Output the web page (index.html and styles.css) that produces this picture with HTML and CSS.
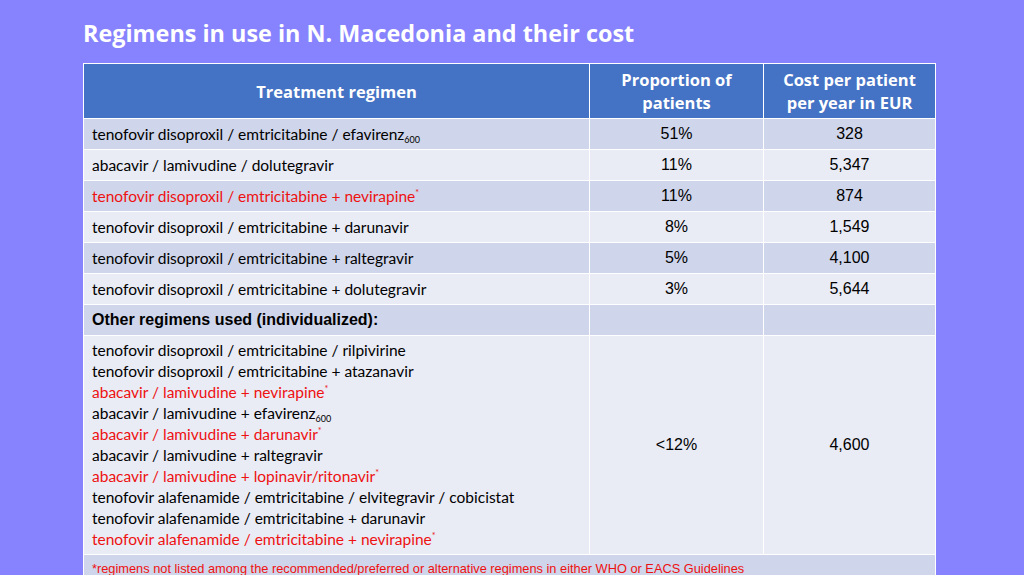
FILE: index.html
```html
<!DOCTYPE html>
<html>
<head>
<meta charset="utf-8">
<link rel="stylesheet" href="styles.css">
</head>
<body>
<div class="slide">
  <h1 class="title">Regimens in use in N. Macedonia and their cost</h1>
  <table class="regimens">
    <colgroup>
      <col class="c-reg">
      <col class="c-prop">
      <col class="c-cost">
    </colgroup>
    <thead>
      <tr>
        <th>Treatment regimen</th>
        <th>Proportion of patients</th>
        <th>Cost per patient per year in EUR</th>
      </tr>
    </thead>
    <tbody>
      <tr class="dark"><td class="reg">tenofovir disoproxil / emtricitabine / efavirenz<sub>600</sub></td><td class="num">51%</td><td class="num">328</td></tr>
      <tr class="light"><td class="reg">abacavir / lamivudine / dolutegravir</td><td class="num">11%</td><td class="num">5,347</td></tr>
      <tr class="dark"><td class="reg red">tenofovir disoproxil / emtricitabine + nevirapine<sup>*</sup></td><td class="num">11%</td><td class="num">874</td></tr>
      <tr class="light"><td class="reg">tenofovir disoproxil / emtricitabine + darunavir</td><td class="num">8%</td><td class="num">1,549</td></tr>
      <tr class="dark"><td class="reg">tenofovir disoproxil / emtricitabine + raltegravir</td><td class="num">5%</td><td class="num">4,100</td></tr>
      <tr class="light"><td class="reg">tenofovir disoproxil / emtricitabine + dolutegravir</td><td class="num">3%</td><td class="num">5,644</td></tr>
      <tr class="dark"><td class="other">Other regimens used (individualized):</td><td></td><td></td></tr>
      <tr class="light">
        <td class="reg list">
          <div>tenofovir disoproxil / emtricitabine / rilpivirine</div>
          <div>tenofovir disoproxil / emtricitabine + atazanavir</div>
          <div class="red">abacavir / lamivudine + nevirapine<sup>*</sup></div>
          <div>abacavir / lamivudine + efavirenz<sub>600</sub></div>
          <div class="red">abacavir / lamivudine + darunavir<sup>*</sup></div>
          <div>abacavir / lamivudine + raltegravir</div>
          <div class="red">abacavir / lamivudine + lopinavir/ritonavir<sup>*</sup></div>
          <div>tenofovir alafenamide / emtricitabine / elvitegravir / cobicistat</div>
          <div>tenofovir alafenamide / emtricitabine + darunavir</div>
          <div class="red">tenofovir alafenamide / emtricitabine + nevirapine<sup>*</sup></div>
        </td>
        <td class="num">&lt;12%</td>
        <td class="num">4,600</td>
      </tr>
      <tr class="dark"><td class="note" colspan="3">*regimens not listed among the recommended/preferred or alternative regimens in either WHO or EACS Guidelines</td></tr>
    </tbody>
  </table>
</div>
</body>
</html>
```

FILE: styles.css
```css
html, body {
  margin: 0;
  padding: 0;
  background: #8782fe;
  overflow: hidden;
}
.slide {
  width: 1024px;
  height: 575px;
  padding: 17px 0 0 83px;
  box-sizing: border-box;
}
.title {
  margin: 0 0 14px 0;
  font-family: "Open Sans", "Noto Sans", sans-serif;
  font-weight: 700;
  font-size: 23.4px;
  line-height: 32px;
  color: #ffffff;
}
.regimens {
  border-collapse: collapse;
  width: 852px;
  table-layout: fixed;
  font-family: Lato, "Liberation Sans", sans-serif;
  font-size: 15.5px;
  color: #000;
}
.c-reg { width: 506px; }
.c-prop { width: 174px; }
.c-cost { width: 172px; }
.regimens th, .regimens td {
  border: 1.5px solid #ffffff;
  padding: 0;
}
.regimens th {
  background: #4472c4;
  color: #fff;
  font-family: "Open Sans", "Noto Sans", sans-serif;
  font-weight: 700;
  font-size: 16.5px;
  line-height: 23px;
  height: 54px;
  padding: 0 10px;
  text-align: center;
  vertical-align: middle;
}
.dark td { background: #cfd5ea; }
.light td { background: #e9ebf5; }
.regimens tbody td { height: 30px; }
.reg {
  padding-left: 8px !important;
  line-height: 21px;
}
.num {
  text-align: center;
  font-family: "Liberation Sans", Arial, sans-serif;
  font-size: 16px;
}
.red { color: #ee1111; }
.other {
  padding-left: 8px !important;
  font-family: "Liberation Sans", Arial, sans-serif;
  font-weight: 700;
  font-size: 16px;
}
.list {
  padding-top: 4px !important;
  padding-bottom: 4px !important;
}
.list div { line-height: 21px; }
sub {
  font-size: 9px;
  vertical-align: -3px;
  line-height: 0;
}
sup {
  font-size: 9px;
  vertical-align: 6px;
  line-height: 0;
}
.note {
  padding: 6px 0 0 8px !important;
  vertical-align: top;
  color: #ee1111;
  font-family: "Liberation Sans", Arial, sans-serif;
  font-size: 12.8px;
  line-height: 16px;
}
```
